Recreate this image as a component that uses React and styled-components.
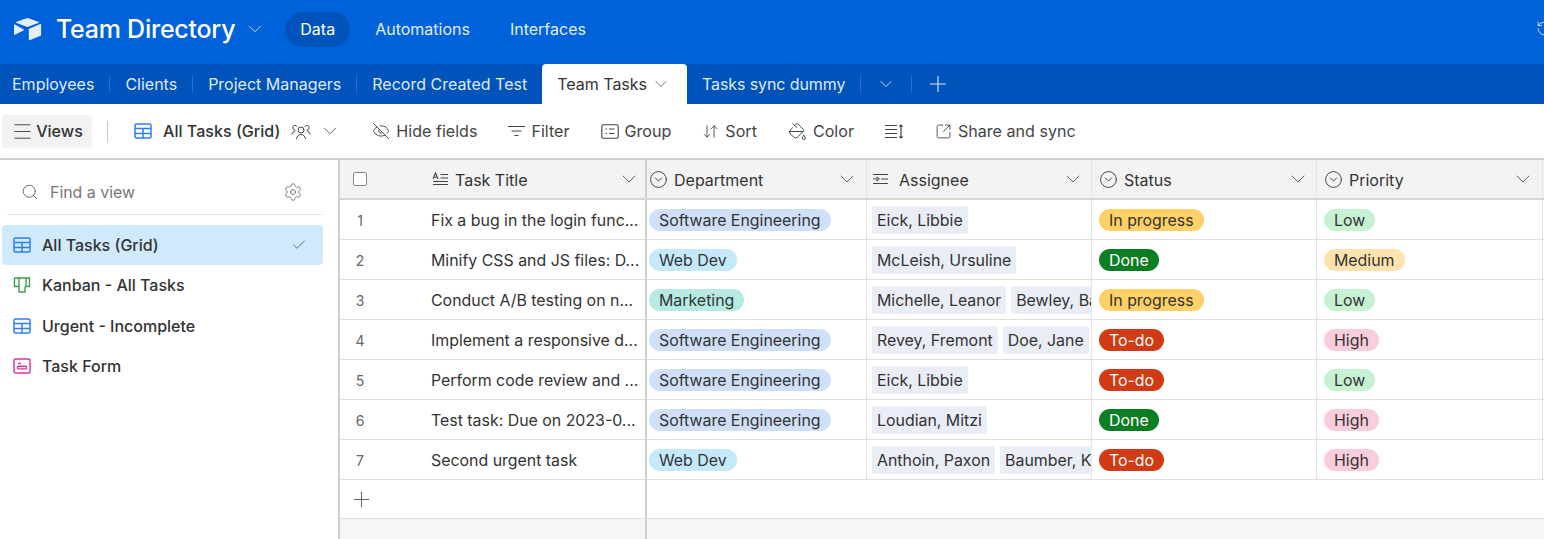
import React from "react";
import styled, { createGlobalStyle } from "styled-components";
import {
  ChevronDown,
  Check,
  Plus,
  Search,
  Settings,
  Menu,
  EyeOff,
  CircleChevronDown,
  ArrowDownUp,
  PaintBucket,
  SquareArrowOutUpRight,
  RotateCcw,
} from "lucide-react";

const GlobalStyle = createGlobalStyle`
  html, body {
    margin: 0;
    padding: 0;
    height: 100%;
    overflow: hidden;
    background: #fff;
    font-family: Inter, "Liberation Sans", sans-serif;
    color: #333;
  }
  * { box-sizing: border-box; }
`;

const Page = styled.div`
  width: 1544px;
  height: 539px;
  display: flex;
  flex-direction: column;
  overflow: hidden;
`;

const TopBar = styled.header`
  height: 64px;
  flex: none;
  display: flex;
  align-items: center;
  background: #0062da;
  color: #fff;
  padding: 0 0 6px 13px;
  position: relative;
  overflow: hidden;
`;
const Title = styled.h1`
  margin: 0 0 0 14px;
  font-size: 25px;
  font-weight: 500;
  letter-spacing: -0.25px;
  white-space: nowrap;
`;
const TitleChevron = styled(ChevronDown)`
  margin: 0 0 0 9px;
  opacity: 0.85;
  flex: none;
`;
const NavList = styled.nav`
  display: flex;
  align-items: center;
  margin-left: 19px;
`;
const NavItem = styled.div`
  height: 35px;
  display: flex;
  align-items: center;
  padding: 0 ${(props) => (props.$active ? "15px" : "20px")};
  margin-right: ${(props) => (props.$active ? "5px" : "0")};
  border-radius: 18px;
  font-size: 16px;
  color: ${(props) => (props.$active ? "#fff" : "#e2edfb")};
  background: ${(props) => (props.$active ? "#0053bb" : "transparent")};
`;
const HistoryIcon = styled(RotateCcw)`
  position: absolute;
  left: 1536px;
  top: 20px;
  color: #dce9fa;
`;

const TabBar = styled.div`
  height: 40px;
  flex: none;
  display: flex;
  align-items: stretch;
  background: #0053bb;
  padding-left: 12px;
`;
const Tab = styled.div`
  display: flex;
  align-items: center;
  font-size: 16px;
  letter-spacing: ${(props) => (props.$tight ? "-0.1px" : "0")};
  white-space: nowrap;
  color: #dfeafa;
`;
const TabDivider = styled.span`
  width: 1px;
  height: 18px;
  align-self: center;
  background: #2b70c8;
  margin: 0 15px;
`;
const ActiveTab = styled(Tab)`
  height: 40px;
  background: #fff;
  color: #333;
  padding: 0 16px 0 15px;
  margin: 0 15px;
  gap: 4px;
  border-radius: 4px 4px 0 0;
`;
const TabIcon = styled.span`
  display: flex;
  align-items: center;
  color: #dfeafa;
  margin-left: ${(props) => props.$pull || 0}px;
`;

const Toolbar = styled.div`
  height: 56px;
  flex: none;
  display: flex;
  align-items: center;
  padding-left: 2px;
  border-bottom: 2px solid #d0d0d0;
  font-size: 16.1px;
  white-space: nowrap;
`;
const ViewsButton = styled.div`
  width: 90px;
  height: 33px;
  display: flex;
  align-items: center;
  justify-content: center;
  gap: 2px;
  background: #f2f2f2;
  border-radius: 3px;
  font-weight: 500;
`;
const ToolbarDivider = styled.span`
  width: 1px;
  height: 21px;
  background: #c9c9c9;
  margin: 0 26px 0 15px;
`;
const ViewName = styled.div`
  display: flex;
  align-items: center;
  font-weight: 500;
  margin-right: 31px;
  gap: 11px;
`;
const ViewChevron = styled(ChevronDown)`
  margin-left: -3px;
  color: #555;
`;
const ToolGroup = styled.div`
  display: flex;
  align-items: center;
  gap: 31px;
`;
const ToolItem = styled.div`
  display: flex;
  align-items: center;
  gap: 6px;
  color: #444;
`;

const Body = styled.div`
  flex: 1;
  display: flex;
  min-height: 0;
`;

const Sidebar = styled.aside`
  width: 340px;
  flex: none;
  padding: 0 15px 0 2px;
  border-right: 2px solid #cfcfcf;
`;
const SearchRow = styled.div`
  height: 55px;
  margin: 0 0 10px 5px;
  padding: 10px 20px 0 14px;
  display: flex;
  align-items: center;
  gap: 11px;
  border-bottom: 1px solid #e5e5e5;
  font-size: 15.9px;
  color: #777;
`;
const SearchLabel = styled.span`
  flex: 1;
`;
const ViewItem = styled.div`
  height: 40.3px;
  display: flex;
  align-items: center;
  gap: 11px;
  padding: 0 16px 0 11px;
  font-size: 16px;
  font-weight: 500;
  border-radius: 4px;
  color: #333;
  background: ${(props) => (props.$active ? "#cfeafd" : "transparent")};
`;
const ViewLabel = styled.span`
  flex: 1;
`;

const Grid = styled.main`
  flex: 1;
  min-width: 0;
  display: flex;
  flex-direction: column;
`;
const Row = styled.div`
  display: grid;
  grid-template-columns: 307px 220px 225px 225px 226px;
  height: 40px;
  flex: none;
  background: ${(props) => (props.$header ? "#f3f3f3" : "#fff")};
  border-bottom: ${(props) => (props.$header ? "2px solid #d6d6d6" : "1px solid #dedede")};
`;
const Cell = styled.div`
  display: flex;
  align-items: center;
  gap: ${(props) => props.$gap ?? 6}px;
  padding: 0 5px;
  overflow: hidden;
  white-space: nowrap;
  border-right: 1px solid #e4e4e4;
`;
const LeadCell = styled(Cell)`
  padding: 0;
  gap: 0;
  border-right: 2px solid #cfcfcf;
`;
const PillCell = styled(Cell)`
  padding: 0 2px 0 7px;
`;
const FirstPillCell = styled(Cell)`
  padding: 0 2px;
`;
const RowNumber = styled.span`
  width: 40px;
  flex: none;
  text-align: center;
  font-size: 14px;
  color: #666;
  margin: 2px 51px 0 0;
`;
const TaskTitle = styled.span`
  font-size: 15.9px;
  color: #333;
  margin-top: 2px;
`;
const CheckBox = styled.span`
  width: 14px;
  height: 14px;
  flex: none;
  margin: 0 65px 0 13px;
  border: 1px solid #8a8a8a;
  border-radius: 2px;
  background: #fff;
`;
const HeaderLabel = styled.span`
  flex: 1;
  font-size: 16px;
  color: #333;
  margin: 1px 0 0 ${(props) => props.$space ?? 0}px;
`;
const HeaderChevron = styled(ChevronDown)`
  flex: none;
  margin-right: ${(props) => props.$end ?? 1}px;
  color: #666;
`;
const FieldIcon = styled(CircleChevronDown)`
  flex: none;
  margin-left: ${(props) => props.$start ?? 2}px;
  color: #444;
`;
const Pill = styled.span`
  display: inline-flex;
  align-items: center;
  height: 22px;
  padding: 2px 10px 0;
  border-radius: 11px;
  font-size: 15.9px;
  flex: none;
  background: ${(props) => props.$bg};
  color: ${(props) => props.$fg || "#333"};
`;
const Person = styled.span`
  display: inline-flex;
  align-items: center;
  height: 28px;
  padding: 2px 5px 0;
  border-radius: 3px;
  font-size: 15.9px;
  flex: none;
  background: #e9edf6;
  color: #333;
`;
const AddRow = styled.div`
  height: 39px;
  flex: none;
  border-bottom: 1px solid #dedede;
  display: flex;
`;
const AddCell = styled.div`
  width: 307px;
  padding-left: 9px;
  display: flex;
  align-items: center;
  border-right: 2px solid #cfcfcf;
  color: #666;
`;
const Footer = styled.div`
  flex: 1;
  background: #f6f6f6;
  display: flex;
`;
const FooterLead = styled.div`
  width: 307px;
  border-right: 2px solid #cfcfcf;
`;

const TableIcon = ({ color = "#2d7ff9" }) => (
  <svg width="18" height="16" viewBox="0 0 18 16" fill="none" stroke={color} strokeWidth="1.5">
    <rect x="1" y="1" width="16" height="14" rx="1.5" />
    <path d="M1 5.5h16M1 10.5h16M9 5.5V15" />
  </svg>
);
const KanbanIcon = () => (
  <svg width="18" height="16" viewBox="0 0 18 16" fill="none" stroke="#3d9a4f" strokeWidth="1.4">
    <path d="M1.5 1h15v8.5h-3.5V1M6 1v14h6V9.5M6 1v8.500H1.500V1" strokeLinejoin="round" />
  </svg>
);
const FormIcon = () => (
  <svg width="18" height="16" viewBox="0 0 18 16" fill="none" stroke="#d6339b" strokeWidth="1.4">
    <rect x="1" y="1" width="16" height="14" rx="1.5" />
    <path d="M5 5.5h3" />
    <rect x="4.5" y="8.3" width="9" height="2.6" rx="1" />
  </svg>
);
const LogoIcon = () => (
  <svg width="29" height="24" viewBox="0 0 29 24" fill="#e4effc">
    <path d="M14.500 1 3.600 4.800c-.6.2-.6.9 0 1.100l10.900 4 10.900-4c.6-.2.6-.9 0-1.100z" />
    <path d="M15.800 12v10.600c0 .5.5.8.9.6l10.900-4.500c.3-.1.5-.4.5-.7V7.500c0-.5-.5-.8-.9-.6z" />
    <path d="M1 8v9.200c0 .5.5.8.9.6l9.600-4.800L1.900 7.400c-.4-.2-.9.1-.9.6z" />
  </svg>
);
const PeopleIcon = () => (
  <svg width="20" height="17" viewBox="0 0 20 17" fill="none" stroke="#444" strokeWidth="1">
    <circle cx="10" cy="7" r="3" />
    <path d="M5.500 16c.4-3 2.200-4.500 4.500-4.500s4.100 1.500 4.500 4.500" />
    <path d="M6.200 3.800a2.300 2.300 0 1 0-2 3.200M1 11.500c.3-2 1.500-3.300 3.400-3.500" />
    <path d="M13.800 3.800a2.300 2.300 0 1 1 2 3.200M19 11.500c-.3-2-1.500-3.300-3.400-3.500" />
  </svg>
);
const TextFieldIcon = () => (
  <svg width="17" height="14" viewBox="0 0 17 14" fill="none" stroke="#444" strokeWidth="1.1">
    <path d="M1 7 3.500 1 6 7M1.800 5.200h3.400M8.500 2.500H16M8.500 6H16M1 9.500h15M1 12.500h15" />
  </svg>
);
const LinkFieldIcon = () => (
  <svg width="17" height="14" viewBox="0 0 17 14" fill="none" stroke="#444" strokeWidth="1.1">
    <path d="M1 2.500h15M1 11.500h15M1 7h4M9 7h7M4.500 5 7 7 4.500 9" />
  </svg>
);
const FilterIcon = () => (
  <svg width="17" height="12" viewBox="0 0 17 12" fill="none" stroke="#444" strokeWidth="1.2">
    <path d="M0 1.500h17M3.500 6h10M6.500 10.500h4" />
  </svg>
);
const GroupIcon = () => (
  <svg width="18" height="15" viewBox="0 0 18 15" fill="none" stroke="#444" strokeWidth="1.1">
    <rect x="0.8" y="0.8" width="16.4" height="13.4" rx="1.5" />
    <path d="M4.500 5h1.500M8 5h5.500M4.500 9.500h1.500M8 9.500h5.500" />
  </svg>
);
const RowHeightIcon = () => (
  <svg width="19" height="15" viewBox="0 0 19 15" fill="none" stroke="#444" strokeWidth="1.2">
    <path d="M0 1.500h12M0 5.500h12M0 9.500h12M0 13.500h12M16 1v13M14.500 2.500 16 1l1.500 1.500M14.500 12.500 16 14l1.500-1.500" />
  </svg>
);

const thin = { strokeWidth: 1.25 };
const hair = { strokeWidth: 1 };

const rows = [
  ["Fix a bug in the login func...", "se", ["Eick, Libbie"], "progress", "low"],
  ["Minify CSS and JS files: D...", "web", ["McLeish, Ursuline"], "done", "medium"],
  ["Conduct A/B testing on n...", "mkt", ["Michelle, Leanor", "Bewley, Ba"], "progress", "low"],
  ["Implement a responsive d...", "se", ["Revey, Fremont", "Doe, Jane"], "todo", "high"],
  ["Perform code review and ...", "se", ["Eick, Libbie"], "todo", "low"],
  ["Test task: Due on 2023-0...", "se", ["Loudian, Mitzi"], "done", "high"],
  ["Second urgent task", "web", ["Anthoin, Paxon", "Baumber, K"], "todo", "high"],
];

const departments = {
  se: { label: "Software Engineering", bg: "#cfdff9" },
  web: { label: "Web Dev", bg: "#c4e9fb" },
  mkt: { label: "Marketing", bg: "#b5ebe2" },
};
const statuses = {
  progress: { label: "In progress", bg: "#ffd066" },
  done: { label: "Done", bg: "#0c7f24", fg: "#fff" },
  todo: { label: "To-do", bg: "#d13a14", fg: "#fff" },
};
const priorities = {
  low: { label: "Low", bg: "#c6f1d2" },
  medium: { label: "Medium", bg: "#ffe3ae" },
  high: { label: "High", bg: "#fbccdb" },
};

const ToolbarButton = ({ icon, children }) => (
  <ToolItem>
    {icon}
    {children}
  </ToolItem>
);

const GridRow = ({ index, row }) => {
  const [title, dept, people, status, priority] = row;
  const d = departments[dept];
  const s = statuses[status];
  const p = priorities[priority];
  return (
    <Row>
      <LeadCell>
        <RowNumber>{index + 1}</RowNumber>
        <TaskTitle>{title}</TaskTitle>
      </LeadCell>
      <FirstPillCell>
        <Pill $bg={d.bg}>{d.label}</Pill>
      </FirstPillCell>
      <Cell $gap={5}>
        {people.map((name) => (
          <Person key={name}>{name}</Person>
        ))}
      </Cell>
      <PillCell>
        <Pill $bg={s.bg} $fg={s.fg}>{s.label}</Pill>
      </PillCell>
      <PillCell>
        <Pill $bg={p.bg}>{p.label}</Pill>
      </PillCell>
    </Row>
  );
};

export default function App() {
  return (
    <Page>
      <GlobalStyle />
      <TopBar>
        <LogoIcon />
        <Title>Team Directory</Title>
        <TitleChevron size={22} {...hair} />
        <NavList>
          <NavItem $active>Data</NavItem>
          <NavItem>Automations</NavItem>
          <NavItem>Interfaces</NavItem>
        </NavList>
        <HistoryIcon size={17} {...thin} />
      </TopBar>

      <TabBar>
        <Tab>Employees</Tab>
        <TabDivider />
        <Tab>Clients</Tab>
        <TabDivider />
        <Tab>Project Managers</Tab>
        <TabDivider />
        <Tab>Record Created Test</Tab>
        <ActiveTab>
          Team Tasks
          <ChevronDown size={20} color="#555" {...hair} />
        </ActiveTab>
        <Tab $tight>Tasks sync dummy</Tab>
        <TabDivider />
        <TabIcon>
          <ChevronDown size={20} {...hair} />
        </TabIcon>
        <TabDivider />
        <TabIcon $pull={-2}>
          <Plus size={26} {...hair} />
        </TabIcon>
      </TabBar>

      <Toolbar>
        <ViewsButton>
          <Menu size={23} color="#444" {...hair} />
          Views
        </ViewsButton>
        <ToolbarDivider />
        <ViewName>
          <TableIcon />
          All Tasks (Grid)
          <PeopleIcon />
          <ViewChevron size={22} {...hair} />
        </ViewName>
        <ToolGroup>
          <ToolbarButton icon={<EyeOff size={18} color="#444" {...thin} />}>Hide fields</ToolbarButton>
          <ToolbarButton icon={<FilterIcon />}>Filter</ToolbarButton>
          <ToolbarButton icon={<GroupIcon />}>Group</ToolbarButton>
          <ToolbarButton icon={<ArrowDownUp size={17} color="#444" {...thin} />}>Sort</ToolbarButton>
          <ToolbarButton icon={<PaintBucket size={19} color="#444" {...thin} />}>Color</ToolbarButton>
          <ToolbarButton icon={<RowHeightIcon />} />
          <ToolbarButton icon={<SquareArrowOutUpRight size={17} color="#444" {...thin} />}>Share and sync</ToolbarButton>
        </ToolGroup>
      </Toolbar>

      <Body>
        <Sidebar>
          <SearchRow>
            <Search size={18} color="#666" {...thin} />
            <SearchLabel>Find a view</SearchLabel>
            <Settings size={20} color="#666" {...hair} />
          </SearchRow>
          <ViewItem $active>
            <TableIcon />
            <ViewLabel>All Tasks (Grid)</ViewLabel>
            <Check size={16} color="#555" {...thin} />
          </ViewItem>
          <ViewItem>
            <KanbanIcon />
            <ViewLabel>Kanban - All Tasks</ViewLabel>
          </ViewItem>
          <ViewItem>
            <TableIcon />
            <ViewLabel>Urgent - Incomplete</ViewLabel>
          </ViewItem>
          <ViewItem>
            <FormIcon />
            <ViewLabel>Task Form</ViewLabel>
          </ViewItem>
        </Sidebar>

        <Grid>
          <Row $header>
            <LeadCell>
              <CheckBox />
              <TextFieldIcon />
              <HeaderLabel $space={6}>Task Title</HeaderLabel>
              <HeaderChevron size={24} $end={4} {...hair} />
            </LeadCell>
            <Cell>
              <FieldIcon size={19} $start={-3} {...thin} />
              <HeaderLabel>Department</HeaderLabel>
              <HeaderChevron size={24} $end={2} {...hair} />
            </Cell>
            <Cell>
              <LinkFieldIcon />
              <HeaderLabel $space={4}>Assignee</HeaderLabel>
              <HeaderChevron size={24} {...hair} />
            </Cell>
            <Cell>
              <FieldIcon size={19} {...thin} />
              <HeaderLabel>Status</HeaderLabel>
              <HeaderChevron size={24} {...hair} />
            </Cell>
            <Cell>
              <FieldIcon size={19} {...thin} />
              <HeaderLabel>Priority</HeaderLabel>
              <HeaderChevron size={24} $end={2} {...hair} />
            </Cell>
          </Row>
          {rows.map((row, i) => (
            <GridRow key={row[0]} index={i} row={row} />
          ))}
          <AddRow>
            <AddCell>
              <Plus size={25} {...hair} />
            </AddCell>
          </AddRow>
          <Footer>
            <FooterLead />
          </Footer>
        </Grid>
      </Body>
    </Page>
  );
}
